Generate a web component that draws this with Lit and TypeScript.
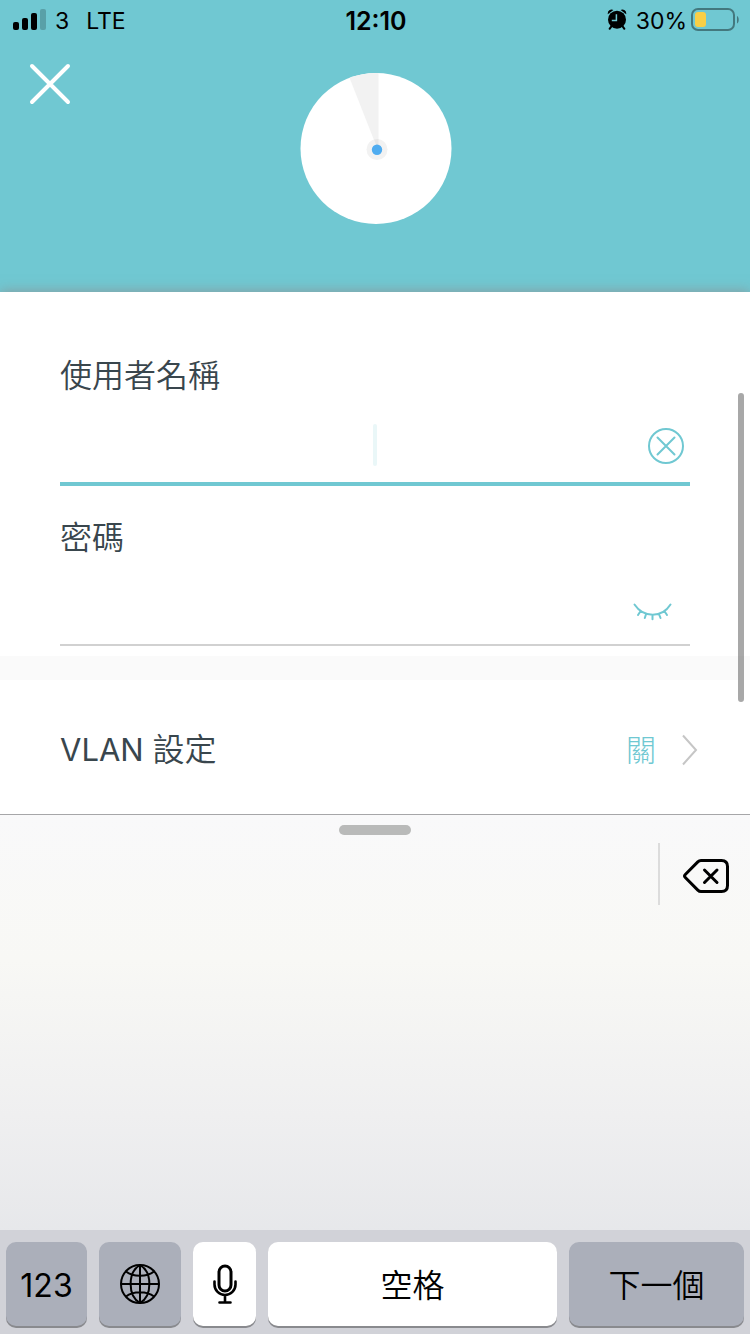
import { LitElement, html, css, svg } from "lit";
import { customElement, state } from "lit/decorators.js";

const fontStack = css`"Inter", "Noto Sans CJK TC", sans-serif`;
const cjkStack = css`"Inter", "Noto Sans CJK TC DemiLight", "Noto Sans CJK TC", sans-serif`;

@customElement("status-bar")
class StatusBar extends LitElement {
  static styles = css`
    :host {
      display: grid;
      grid-template-columns: 1fr auto 1fr;
      align-items: center;
      height: 40px;
      padding: 2px 11px 0 13px;
      color: #000;
      font: 400 23px/38px ${fontStack};
    }
    .side {
      display: flex;
      align-items: center;
    }
    .carrier {
      margin-left: 9px;
    }
    .network {
      margin-left: 17px;
    }
    .time {
      font-size: 25px;
      font-weight: 600;
    }
    .right {
      justify-content: flex-end;
    }
    .percent {
      margin: 0 4px 0 9px;
    }
    svg {
      display: block;
      flex: none;
      margin-bottom: 2px;
    }
  `;

  render() {
    return html`
      <div class="side">
        <svg width="33" height="22" viewBox="0 0 33 22" aria-hidden="true">
          <rect x="0" y="13" width="6" height="8" rx="2" />
          <rect x="9" y="9" width="6" height="12" rx="2" />
          <rect x="18" y="4" width="6" height="17" rx="2" />
          <rect x="27" y="0" width="6" height="21" rx="2" opacity=".2" />
        </svg>
        <span class="carrier">3</span>
        <span class="network">LTE</span>
      </div>
      <time class="time">12:10</time>
      <div class="side right">
        <svg width="20" height="22" viewBox="0 0 20 22" aria-hidden="true">
          <path d="M.8 5.200A4 4 0 0 1 6.400 .9Z M19.200 5.200A4 4 0 0 0 13.600 .9Z" />
          <circle cx="10" cy="10.700" r="9" />
          <path d="M4.400 17.300 2.600 19.800M15.600 17.300l1.800 2.500" stroke="#000" stroke-width="2" stroke-linecap="round" />
          <path d="M9.400 5.200v6.300H4.800" fill="none" stroke="#70c8d2" stroke-width="1.500" />
        </svg>
        <span class="percent">30%</span>
        <svg width="48" height="24" viewBox="0 0 48 24" aria-hidden="true">
          <rect x="1" y="1" width="42" height="21" rx="6" fill="none" stroke="#000" stroke-opacity=".4" stroke-width="2" />
          <rect x="4" y="4" width="11" height="15" rx="3" fill="#f9cf46" />
          <path d="M46 8c2.300 1 2.300 6.500 0 7.500Z" opacity=".4" />
        </svg>
      </div>
    `;
  }
}

@customElement("soft-keyboard")
class SoftKeyboard extends LitElement {
  static styles = css`
    :host {
      display: flex;
      flex-direction: column;
      border-top: 1px solid #a6a6a8;
      background: linear-gradient(#f9f9fa, #f8f8f5 28%, #efeff0 58%, #e6e7ea 82%);
      font: 350 32px/40px ${cjkStack};
    }
    button {
      box-sizing: border-box;
      border: 0;
      padding: 0;
      margin: 0;
      background: none;
      color: #000;
      font: inherit;
      display: flex;
      align-items: center;
      justify-content: center;
    }
    .handle {
      width: 72px;
      height: 10px;
      margin: 10px auto 8px;
      border-radius: 5px;
      background: #b9bab9;
    }
    .candidates {
      display: flex;
      justify-content: flex-end;
      height: 62px;
    }
    .delete {
      width: 92px;
      padding: 4px 0 0 2px;
      border-left: 2px solid #dcdcdc;
    }
    .keys {
      display: flex;
      gap: 12px;
      margin-top: auto;
      padding: 12px 6px 8px;
      background: #d1d2d8;
    }
    .key {
      flex: 82 1 0;
      height: 84px;
      border-radius: 10px;
      background: #abafba;
      box-shadow: 0 2px 0 #898a8e;
    }
    .light {
      background: #fff;
    }
    .text {
      padding-top: 4px;
    }
    .digits {
      flex-grow: 81;
      font-weight: 400;
    }
    .mic {
      flex-grow: 63;
    }
    .space {
      flex-grow: 289;
    }
    .next {
      flex-grow: 175;
    }
    svg {
      display: block;
      fill: none;
      stroke: #000;
    }
  `;

  render() {
    return html`
      <div class="handle"></div>
      <div class="candidates">
        <button class="delete" aria-label="刪除">
          <svg width="48" height="36" viewBox="0 0 48 36" stroke-width="3" stroke-linejoin="round" stroke-linecap="round">
            <path d="M19 2.500H39.500Q45.500 2.500 45.500 8.500V27.500Q45.500 33.500 39.500 33.500H19Q17.200 33.500 15.800 32.100L3.300 19.500Q1.800 18 3.300 16.500L15.800 3.900Q17.200 2.500 19 2.500Z" />
            <path d="M22.500 12 35 24.500M35 12 22.500 24.500" />
          </svg>
        </button>
      </div>
      <div class="keys">
        <button class="key text digits">123</button>
        <button class="key" aria-label="切換鍵盤">
          <svg width="42" height="42" viewBox="0 0 42 42" stroke-width="2">
            <circle cx="21" cy="21" r="19" />
            <path d="M21 2v38M2 21h38M21 2C8.500 9 8.500 33 21 40M21 2C33.500 9 33.500 33 21 40M7 8.500C14 14.300 28 14.300 35 8.500M7 33.500C14 27.700 28 27.700 35 33.500" />
          </svg>
        </button>
        <button class="key light mic" aria-label="聽寫">
          <svg width="26" height="42" viewBox="0 0 26 42" stroke-width="3" stroke-linecap="round">
            <rect x="7" y="3" width="12" height="25" rx="6" />
            <path d="M2.500 18.500v3a10.500 10.500 0 0 0 21 0v-3M13 32v7M7.500 39.500h11" stroke-width="2.600" />
          </svg>
        </button>
        <button class="key light text space">空格</button>
        <button class="key text next">下一個</button>
      </div>
    `;
  }
}

@customElement("app-root")
class AppRoot extends LitElement {
  @state() private username = "";
  @state() private password = "";
  @state() private reveal = false;

  static styles = css`
    * {
      box-sizing: border-box;
    }
    :host {
      position: relative;
      display: flex;
      flex-direction: column;
      min-height: 100vh;
      background: #fff;
      color: #39464d;
      font: 350 32px/48px ${cjkStack};
    }
    button {
      border: 0;
      padding: 0;
      background: none;
      color: inherit;
      font: inherit;
    }
    svg {
      display: block;
      fill: none;
    }
    .header {
      background: #70c8d2;
    }
    .hero {
      display: grid;
      grid-template-columns: 1fr auto 1fr;
      align-items: start;
      padding: 22px 26px 66px 28px;
    }
    .dial {
      margin-top: 10px;
    }
    .sheet {
      background: #fff;
      box-shadow: 0 0 12px rgba(150, 130, 130, 0.7);
      clip-path: inset(-20px 0 0 0);
    }
    .form {
      padding: 60px 60px 10px;
    }
    .form label {
      display: block;
    }
    .field {
      position: relative;
      display: flex;
      align-items: center;
      height: 76px;
      margin-top: 8px;
      padding-top: 2px;
      border-bottom: 2px solid #d1d1d1;
    }
    .active {
      height: 78px;
      margin-bottom: 28px;
      border-bottom: 4px solid #70c8d2;
    }
    .field input {
      flex: 1;
      min-width: 0;
      height: 48px;
      padding: 0;
      border: 0;
      outline: 0;
      background: none;
      color: inherit;
      font: inherit;
    }
    .caret {
      position: absolute;
      left: 50%;
      top: 16px;
      width: 4px;
      height: 42px;
      margin-left: -2px;
      border-radius: 2px;
      background: #eaf7f8;
    }
    .clear {
      margin-right: 5px;
    }
    .eye {
      margin-right: 18px;
    }
    .band {
      height: 24px;
      background: #fafafa;
    }
    .row {
      display: flex;
      align-items: center;
      width: 100%;
      height: 134px;
      padding: 6px 52px 0 60px;
      text-align: left;
    }
    .name {
      flex: 1;
    }
    .latin {
      font-size: 31px;
      font-weight: 400;
    }
    .value {
      margin-right: 26px;
      color: #70c8d2;
      font: 300 30px/48px ${fontStack};
    }
    .scroll {
      position: absolute;
      right: 6px;
      top: 393px;
      width: 6px;
      height: 309px;
      border-radius: 3px;
      background: rgba(0, 0, 0, 0.34);
    }
    soft-keyboard {
      flex: 1;
      min-height: 300px;
    }
  `;

  private closeIcon = svg`<path d="M4 4 40 40M40 4 4 40" stroke="#fff" stroke-width="4" stroke-linecap="round" />`;

  render() {
    return html`
      <header class="header">
        <status-bar></status-bar>
        <div class="hero">
          <button class="close" aria-label="關閉">
            <svg width="44" height="44" viewBox="0 0 44 44">${this.closeIcon}</svg>
          </button>
          <svg class="dial" width="152" height="154" viewBox="0 0 152 154" aria-hidden="true">
            <circle cx="76" cy="76.500" r="75.500" fill="#fff" />
            <path d="M77.500 77 49.500 5.800Q63 1 78.500 1.100V77Z" fill="#f2f2f2" />
            <circle cx="77" cy="77.500" r="10.500" fill="#f2f2f2" />
            <path d="M77.500 76 74 67.500Q76 67 78.500 67V76Z" fill="#e6e6e6" />
            <circle cx="77" cy="77.700" r="5.200" fill="#4facf0" />
          </svg>
        </div>
      </header>
      <main class="sheet">
        <form class="form" @submit=${(e: Event) => e.preventDefault()}>
          <label for="username">使用者名稱</label>
          <div class="field active">
            <input id="username" type="text" autocomplete="off" .value=${this.username}
              @input=${(e: Event) => (this.username = (e.target as HTMLInputElement).value)} />
            <span class="caret"></span>
            <button class="clear" type="button" aria-label="清除" @click=${() => (this.username = "")}>
              <svg width="38" height="38" viewBox="0 0 38 38" stroke="#70c8d2" stroke-width="2" stroke-linecap="round">
                <circle cx="19" cy="19" r="17" />
                <path d="M10.500 10.500 27.500 27.500M27.500 10.500 10.500 27.500" />
              </svg>
            </button>
          </div>
          <label for="password">密碼</label>
          <div class="field">
            <input id="password" type=${this.reveal ? "text" : "password"} .value=${this.password}
              @input=${(e: Event) => (this.password = (e.target as HTMLInputElement).value)} />
            <button class="eye" type="button" aria-label="顯示密碼" @click=${() => (this.reveal = !this.reveal)}>
              <svg width="40" height="26" viewBox="0 0 40 26" stroke="#70c8d2" stroke-width="2" stroke-linecap="round">
                <path d="M2.500 9.500C11.500 23 30 23 38.500 9.500M8.500 16.200 6 20M14 19.200 12.800 23M20.500 20V24.200M27 19.200 28.500 23M32.500 16.200 35 20" />
              </svg>
            </button>
          </div>
        </form>
        <div class="band"></div>
        <button class="row">
          <span class="name"><span class="latin">VLAN </span>設定</span>
          <span class="value">關</span>
          <svg width="16" height="32" viewBox="0 0 16 32" stroke="#c6c6c6" stroke-width="2">
            <path d="M1 1.500 14 16 1 30.500" />
          </svg>
        </button>
      </main>
      <soft-keyboard></soft-keyboard>
      <div class="scroll"></div>
    `;
  }
}
